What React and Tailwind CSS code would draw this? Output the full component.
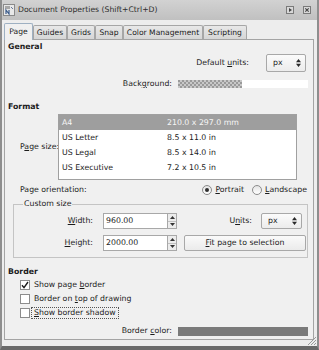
const tabs = [
    { label: 'Page', w: 'w-[29px]', active: true },
    { label: 'Guides', w: 'w-[34px]' },
    { label: 'Grids', w: 'w-[28px]' },
    { label: 'Snap', w: 'w-[28px]' },
    { label: 'Color Management', w: 'w-[80px]' },
    { label: 'Scripting', w: 'w-[44px]' },
]

const sizes = [
    ['A4', '210.0 x 297.0 mm'],
    ['US Letter', '8.5 x 11.0 in'],
    ['US Legal', '8.5 x 14.0 in'],
    ['US Executive', '7.2 x 10.5 in'],
]

const U = ({ children }) => <span className="underline decoration-[0.5px] underline-offset-[1px]">{children}</span>

const ComboArrows = () => (
    <svg width="5" height="8" viewBox="0 0 5 8">
        <path d="M0 3.2 2.5 0 5 3.2z M0 4.8 2.5 8 5 4.8z" fill="#2a2a2a" />
    </svg>
)

const Combo = ({ className }) => (
    <div className={`flex items-center justify-between rounded-[2px] border border-[#a8a8a8] bg-gradient-to-b from-[#fbfbfb] to-[#ececec] pl-[6px] pr-[4px] ${className}`}>
        <span>px</span>
        <ComboArrows />
    </div>
)

const Spin = () => (
    <div className="flex w-[9px] flex-col border border-l-0 border-[#a8a8a8] bg-[#ececec]">
        <div className="flex flex-1 items-center justify-center border-b border-[#c0c0c0]">
            <svg width="5" height="3" viewBox="0 0 5 3"><path d="M0 3 2.5 0 5 3z" fill="#333" /></svg>
        </div>
        <div className="flex flex-1 items-center justify-center">
            <svg width="5" height="3" viewBox="0 0 5 3"><path d="M0 0 2.5 3 5 0z" fill="#333" /></svg>
        </div>
    </div>
)

const Field = ({ value }) => (
    <div className="flex h-[16px]">
        <div className="flex w-[65px] items-center border border-[#a8a8a8] bg-white pl-[2px]">{value}</div>
        <Spin />
    </div>
)

const Radio = ({ on }) => (
    <span className="flex h-[10px] w-[10px] items-center justify-center rounded-full border border-[#8c8c8c] bg-gradient-to-b from-[#e4e4e4] to-white">
        {on && <span className="h-[4px] w-[4px] rounded-full bg-[#303030]" />}
    </span>
)

const Check = ({ on }) => (
    <span className="flex h-[10px] w-[10px] items-center justify-center border border-[#8c8c8c] bg-white">
        {on && (
            <svg width="8" height="8" viewBox="0 0 8 8">
                <path d="M1 4.2 3 6.6 7 1" stroke="#1a1a1a" strokeWidth="1.4" fill="none" />
            </svg>
        )}
    </span>
)

export default function App() {
    return (
        <div className="relative flex h-[350px] w-[319px] flex-col overflow-hidden whitespace-nowrap border-x-2 border-b-4 border-x-[#8e8e8e] border-b-[#6a6a6a] bg-[#ededed] font-['DejaVu_Sans',sans-serif] text-[7.8px] leading-[12px] text-[#1c1c1c]">
            {/* title bar */}
            <div className="flex h-[20px] shrink-0 items-center bg-gradient-to-b from-[#d2d2d2] to-[#c0c0c0] pl-[1px] pr-[4px] text-[7.7px] text-[#2e2e2e]">
                <svg width="12" height="12" viewBox="0 0 12 12" className="mr-[3px]">
                    <rect x="0.5" y="0.5" width="11" height="11" fill="#e8e8e8" stroke="#8a8a8a" />
                    <path d="M2 2h5v3H2z" fill="#a8a8a8" />
                    <path d="M3 10V6l3 4V6" stroke="#3a5a8a" strokeWidth="1.2" fill="none" />
                    <path d="M8 3l2 2" stroke="#6a7a9a" strokeWidth="1" />
                </svg>
                <span>Document Properties (Shift+Ctrl+D)</span>
                <div className="ml-auto flex items-center gap-[9px] pr-[2px]">
                    <svg width="8" height="8" viewBox="0 0 8 8">
                        <rect x="0.5" y="0.5" width="7" height="7" fill="#d8d8d8" stroke="#7a7a7a" />
                        <path d="M3 2v4l3-2z" fill="#444" />
                    </svg>
                    <svg width="8" height="8" viewBox="0 0 8 8">
                        <rect x="0.5" y="0.5" width="7" height="7" fill="#d8d8d8" stroke="#7a7a7a" />
                        <path d="M2.3 2.3l3.4 3.4M5.7 2.3 2.3 5.7" stroke="#444" strokeWidth="1.1" />
                    </svg>
                </div>
            </div>

            <div className="flex flex-1 flex-col pl-[2px] pr-[3px]">
                {/* tabs */}
                <div className="flex h-[19px] shrink-0 items-end text-[7.6px]">
                    {tabs.map((t) =>
                        t.active ? (
                            <div
                                key={t.label}
                                className={`${t.w} relative z-10 -mb-px flex h-[17px] items-center justify-center rounded-t-[2px] border border-b-0 border-[#9eb0c2] bg-[#f0f0f0]`}
                            >
                                {t.label}
                            </div>
                        ) : (
                            <div
                                key={t.label}
                                className={`${t.w} flex h-[14px] items-center justify-center rounded-t-[2px] border border-b-0 border-[#a6a6a6] bg-gradient-to-b from-[#e8e8e8] to-[#d6d6d6]`}
                            >
                                {t.label}
                            </div>
                        ),
                    )}
                </div>

                {/* page panel */}
                <div className="flex w-[310px] flex-col border border-[#a4a4a4] bg-[#f0f0f0] pb-[2px]">
                    <div className="mt-[1px] h-[12px] pl-[3px] font-bold">General</div>

                    <div className="mt-[1px] flex h-[18px] items-center justify-end pr-[7px]">
                        <span className="mr-[17px]">Default <U>u</U>nits:</span>
                        <Combo className="h-[18px] w-[40px]" />
                    </div>

                    <div className="mt-[6px] flex h-[12px] items-center pr-[5px]">
                        <span className="w-[167px] text-right">Back<U>g</U>round:</span>
                        <div className="ml-[6px] flex h-[8px] flex-1 bg-white">
                            <svg width="64" height="8">
                                <defs>
                                    <pattern id="chk" width="4" height="4" patternUnits="userSpaceOnUse">
                                        <rect width="4" height="4" fill="#c8c8c8" />
                                        <rect width="2" height="2" fill="#9a9a9a" />
                                        <rect x="2" y="2" width="2" height="2" fill="#9a9a9a" />
                                    </pattern>
                                </defs>
                                <rect width="64" height="8" fill="url(#chk)" />
                            </svg>
                        </div>
                    </div>

                    <div className="mt-[11px] h-[12px] pl-[3px] font-bold">Format</div>

                    <div className="mt-[1px] flex items-center">
                        <span className="w-[53px] shrink-0 pl-[15px]">P<U>a</U>ge size:</span>
                        <div className="h-[66px] w-[239px] border border-[#a0a0a0] bg-white">
                            {sizes.map(([name, dim], i) => (
                                <div
                                    key={name}
                                    className={`flex h-[15px] items-center pl-[3px] ${i === 0 ? 'bg-[#9e9e9e] text-[#f6f6f6]' : ''}`}
                                >
                                    <span className="w-[105px]">{name}</span>
                                    <span>{dim}</span>
                                </div>
                            ))}
                        </div>
                    </div>

                    <div className="mt-[4px] flex h-[12px] items-center pl-[15px] pr-[6px]">
                        <span>Page orientation:</span>
                        <div className="ml-auto flex items-center">
                            <Radio on />
                            <span className="ml-[3px]"><U>P</U>ortrait</span>
                            <span className="ml-[8px]"><Radio /></span>
                            <span className="ml-[3px]"><U>L</U>andscape</span>
                        </div>
                    </div>

                    <fieldset className="mt-[3px] ml-[8px] mr-[5px] border border-[#c4c4c4] px-0 pt-[4px] pb-[6px]">
                        <legend className="ml-[9px] px-[1px] leading-[10px]">Custom size</legend>
                        <div className="flex h-[16px] items-center pr-[5px]">
                            <span className="w-[79px] text-right"><U>W</U>idth:</span>
                            <div className="ml-[10px]"><Field value="960.00" /></div>
                            <span className="ml-auto mr-[9px]">U<U>n</U>its:</span>
                            <Combo className="h-[16px] w-[41px]" />
                        </div>
                        <div className="mt-[6px] flex h-[16px] items-center pr-[1px]">
                            <span className="w-[79px] text-right"><U>H</U>eight:</span>
                            <div className="ml-[10px]"><Field value="2000.00" /></div>
                            <div className="ml-[7px] flex h-[16px] flex-1 items-center justify-center rounded-[2px] border border-[#a8a8a8] bg-gradient-to-b from-[#fafafa] to-[#ebebeb]">
                                <span><U>F</U>it page to selection</span>
                            </div>
                        </div>
                    </fieldset>

                    <div className="mt-[8px] h-[12px] pl-[3px] font-bold">Border</div>

                    {[
                        [true, <>Show page <U>b</U>order</>, false],
                        [false, <>Border on <U>t</U>op of drawing</>, false],
                        [false, <><U>S</U>how border shadow</>, true],
                    ].map(([on, label, focus], i) => (
                        <div key={i} className="flex h-[14px] items-center pl-[15px]">
                            <Check on={on} />
                            <span className={`ml-[1px] px-[2px] leading-[10px] ${focus ? 'border border-dotted border-[#555]' : 'border border-transparent'}`}>
                                {label}
                            </span>
                        </div>
                    ))}

                    <div className="mt-[5px] flex h-[12px] items-center pr-[5px]">
                        <span className="w-[167px] text-right">Border <U>c</U>olor:</span>
                        <div className="ml-[6px] h-[9px] flex-1 bg-[#7a7a7a]" />
                    </div>
                </div>
            </div>

            {/* resize grip */}
            <svg width="10" height="10" viewBox="0 0 10 10" className="absolute bottom-0 right-0">
                <path d="M9 1 1 9M9 4 4 9M9 7 7 9" stroke="#9a9a9a" strokeWidth="1" />
            </svg>
        </div>
    )
}
